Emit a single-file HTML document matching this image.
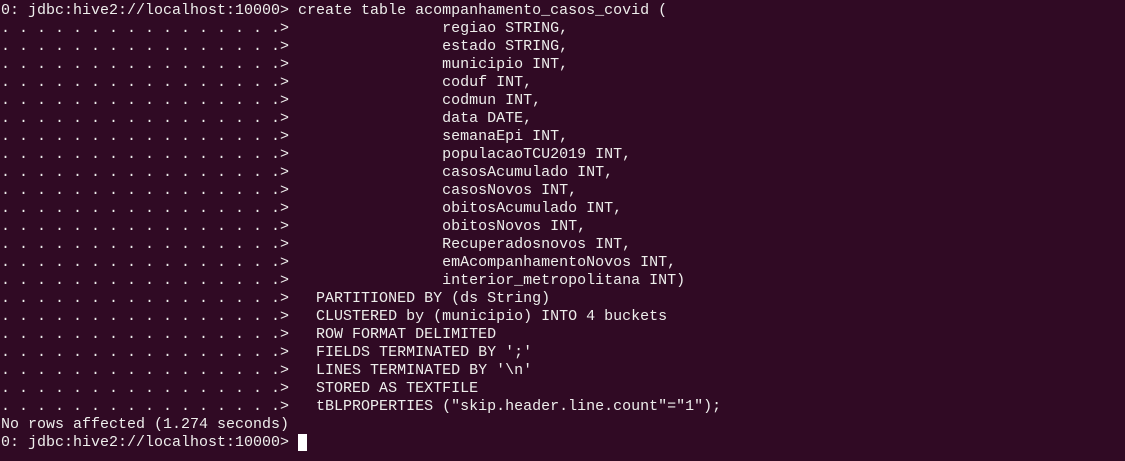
<!DOCTYPE html>
<html><head><meta charset="utf-8"><style>
html,body{margin:0;padding:0;background:#300a24;width:1125px;height:461px;overflow:hidden}
pre{margin:0;position:absolute;left:1px;top:2px;font-family:"Liberation Mono",monospace;font-size:15px;line-height:18px;color:#eeeeec}
.c{display:inline-block;width:9px;height:17px;background:#fff;vertical-align:top}
</style></head><body><pre>0: jdbc:hive2://localhost:10000> create table acompanhamento_casos_covid (
. . . . . . . . . . . . . . . .>                 regiao STRING,
. . . . . . . . . . . . . . . .>                 estado STRING,
. . . . . . . . . . . . . . . .>                 municipio INT,
. . . . . . . . . . . . . . . .>                 coduf INT,
. . . . . . . . . . . . . . . .>                 codmun INT,
. . . . . . . . . . . . . . . .>                 data DATE,
. . . . . . . . . . . . . . . .>                 semanaEpi INT,
. . . . . . . . . . . . . . . .>                 populacaoTCU2019 INT,
. . . . . . . . . . . . . . . .>                 casosAcumulado INT,
. . . . . . . . . . . . . . . .>                 casosNovos INT,
. . . . . . . . . . . . . . . .>                 obitosAcumulado INT,
. . . . . . . . . . . . . . . .>                 obitosNovos INT,
. . . . . . . . . . . . . . . .>                 Recuperadosnovos INT,
. . . . . . . . . . . . . . . .>                 emAcompanhamentoNovos INT,
. . . . . . . . . . . . . . . .>                 interior_metropolitana INT)
. . . . . . . . . . . . . . . .>   PARTITIONED BY (ds String)
. . . . . . . . . . . . . . . .>   CLUSTERED by (municipio) INTO 4 buckets
. . . . . . . . . . . . . . . .>   ROW FORMAT DELIMITED
. . . . . . . . . . . . . . . .>   FIELDS TERMINATED BY ';'
. . . . . . . . . . . . . . . .>   LINES TERMINATED BY '\n'
. . . . . . . . . . . . . . . .>   STORED AS TEXTFILE
. . . . . . . . . . . . . . . .>   tBLPROPERTIES ("skip.header.line.count"="1");
No rows affected (1.274 seconds)
0: jdbc:hive2://localhost:10000> <span class="c"></span></pre></body></html>
